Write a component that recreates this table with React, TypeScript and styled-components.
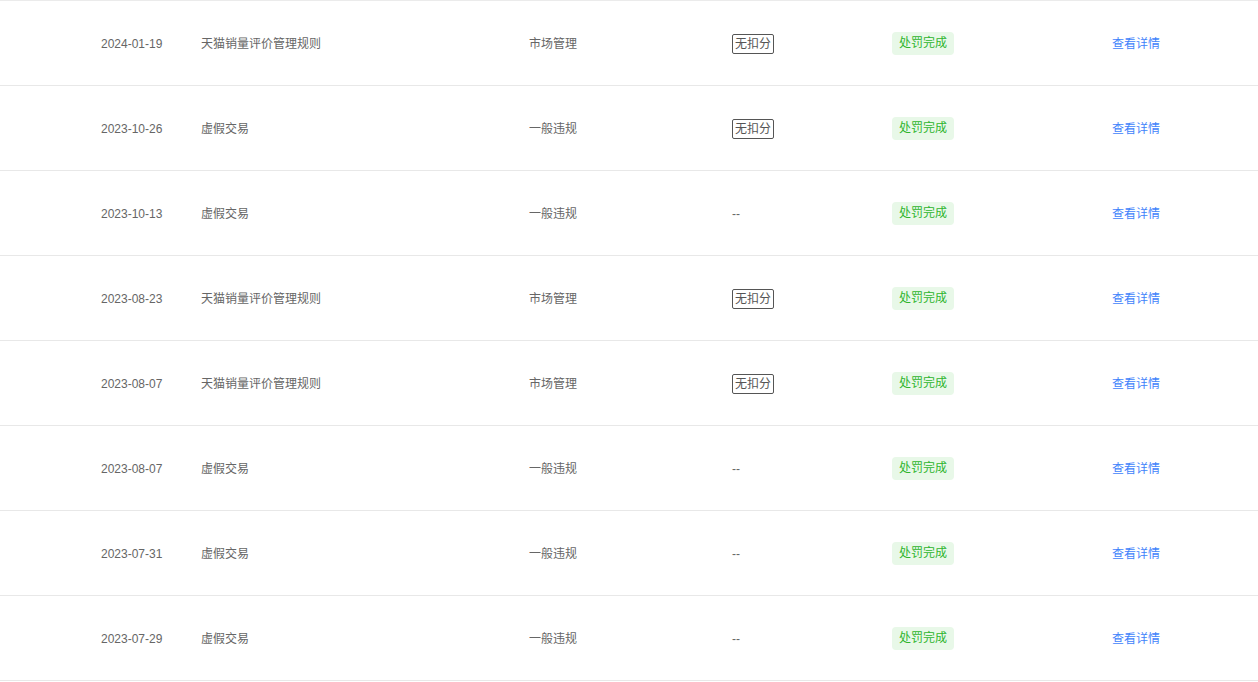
import React from "react";
import styled, { createGlobalStyle } from "styled-components";

const GlobalStyle = createGlobalStyle`
  html, body {
    margin: 0;
    padding: 0;
    background: #ffffff;
  }
  body {
    font-family: "Liberation Sans", "Noto Sans CJK SC", Arial, sans-serif;
    font-size: 12px;
    color: #666666;
  }
`;

type Record = {
  date: string;
  rule: string;
  kind: string;
  noDeduct: boolean;
};

const records: Record[] = [
  { date: "2024-01-19", rule: "天猫销量评价管理规则", kind: "市场管理", noDeduct: true },
  { date: "2023-10-26", rule: "虚假交易", kind: "一般违规", noDeduct: true },
  { date: "2023-10-13", rule: "虚假交易", kind: "一般违规", noDeduct: false },
  { date: "2023-08-23", rule: "天猫销量评价管理规则", kind: "市场管理", noDeduct: true },
  { date: "2023-08-07", rule: "天猫销量评价管理规则", kind: "市场管理", noDeduct: true },
  { date: "2023-08-07", rule: "虚假交易", kind: "一般违规", noDeduct: false },
  { date: "2023-07-31", rule: "虚假交易", kind: "一般违规", noDeduct: false },
  { date: "2023-07-29", rule: "虚假交易", kind: "一般违规", noDeduct: false },
];

const Table = styled.div`
  width: 1258px;
  border-top: 1px solid #ebebeb;
`;

const Row = styled.div`
  display: grid;
  grid-template-columns: 100px 328px 203px 160px 220px 1fr;
  align-items: center;
  height: 84px;
  padding-left: 101px;
  border-bottom: 1px solid #e8e8e8;
  box-sizing: content-box;
`;

const Cell = styled.div`
  color: #666666;
  line-height: 20px;
  padding-top: 1px;
  white-space: nowrap;
`;

const OutlineTag = styled.span`
  display: inline-block;
  height: 18px;
  line-height: 18px;
  padding: 0 2px;
  border: 1px solid #555555;
  border-radius: 2px;
  color: #555555;
`;

const StatusTag = styled.span`
  display: inline-block;
  height: 23px;
  line-height: 23px;
  padding: 0 7px;
  border-radius: 4px;
  background: #e8f8e8;
  color: #2eb52e;
`;

const DetailLink = styled.a`
  color: #3f83fb;
  text-decoration: none;
  cursor: pointer;
`;

export default function App() {
  return (
    <>
      <GlobalStyle />
      <Table>
        {records.map((r, i) => (
          <Row key={i}>
            <Cell>{r.date}</Cell>
            <Cell>{r.rule}</Cell>
            <Cell>{r.kind}</Cell>
            <Cell>{r.noDeduct ? <OutlineTag>无扣分</OutlineTag> : "--"}</Cell>
            <Cell>
              <StatusTag>处罚完成</StatusTag>
            </Cell>
            <Cell>
              <DetailLink>查看详情</DetailLink>
            </Cell>
          </Row>
        ))}
      </Table>
    </>
  );
}
